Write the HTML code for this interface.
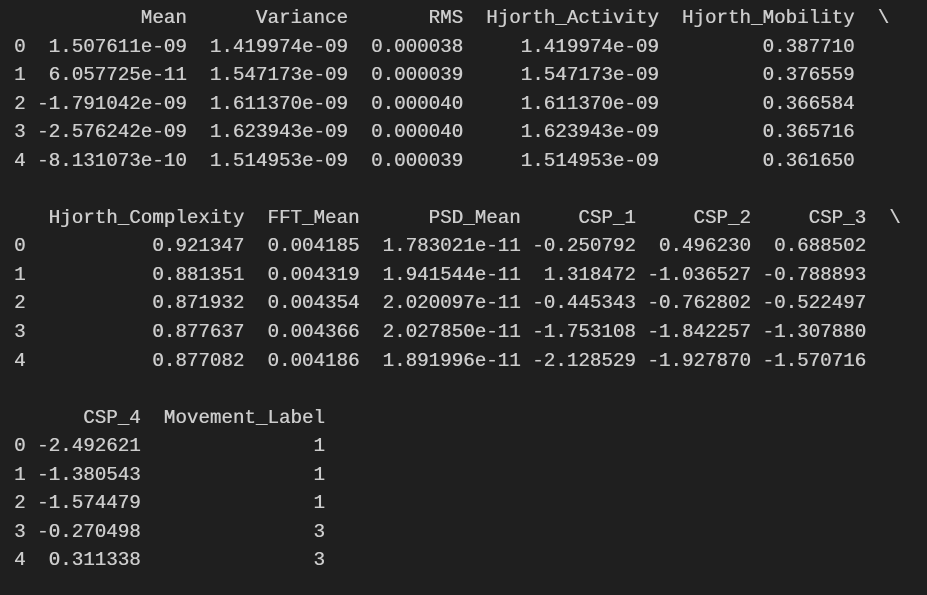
<!DOCTYPE html>
<html><head><meta charset="utf-8"><style>
html,body{margin:0;padding:0;background:#1f1f1f;width:927px;height:595px;overflow:hidden}
pre{margin:0;padding:4px 0 0 14px;font-family:"Liberation Mono",monospace;font-size:19.2px;line-height:28.55px;color:#cccccc;text-shadow:0.4px 0 0 #cccccc}
</style></head><body><pre>           Mean      Variance       RMS  Hjorth_Activity  Hjorth_Mobility  \
0  1.507611e-09  1.419974e-09  0.000038     1.419974e-09         0.387710
1  6.057725e-11  1.547173e-09  0.000039     1.547173e-09         0.376559
2 -1.791042e-09  1.611370e-09  0.000040     1.611370e-09         0.366584
3 -2.576242e-09  1.623943e-09  0.000040     1.623943e-09         0.365716
4 -8.131073e-10  1.514953e-09  0.000039     1.514953e-09         0.361650

   Hjorth_Complexity  FFT_Mean      PSD_Mean     CSP_1     CSP_2     CSP_3  \
0           0.921347  0.004185  1.783021e-11 -0.250792  0.496230  0.688502
1           0.881351  0.004319  1.941544e-11  1.318472 -1.036527 -0.788893
2           0.871932  0.004354  2.020097e-11 -0.445343 -0.762802 -0.522497
3           0.877637  0.004366  2.027850e-11 -1.753108 -1.842257 -1.307880
4           0.877082  0.004186  1.891996e-11 -2.128529 -1.927870 -1.570716

      CSP_4  Movement_Label
0 -2.492621               1
1 -1.380543               1
2 -1.574479               1
3 -0.270498               3
4  0.311338               3
</pre></body></html>
